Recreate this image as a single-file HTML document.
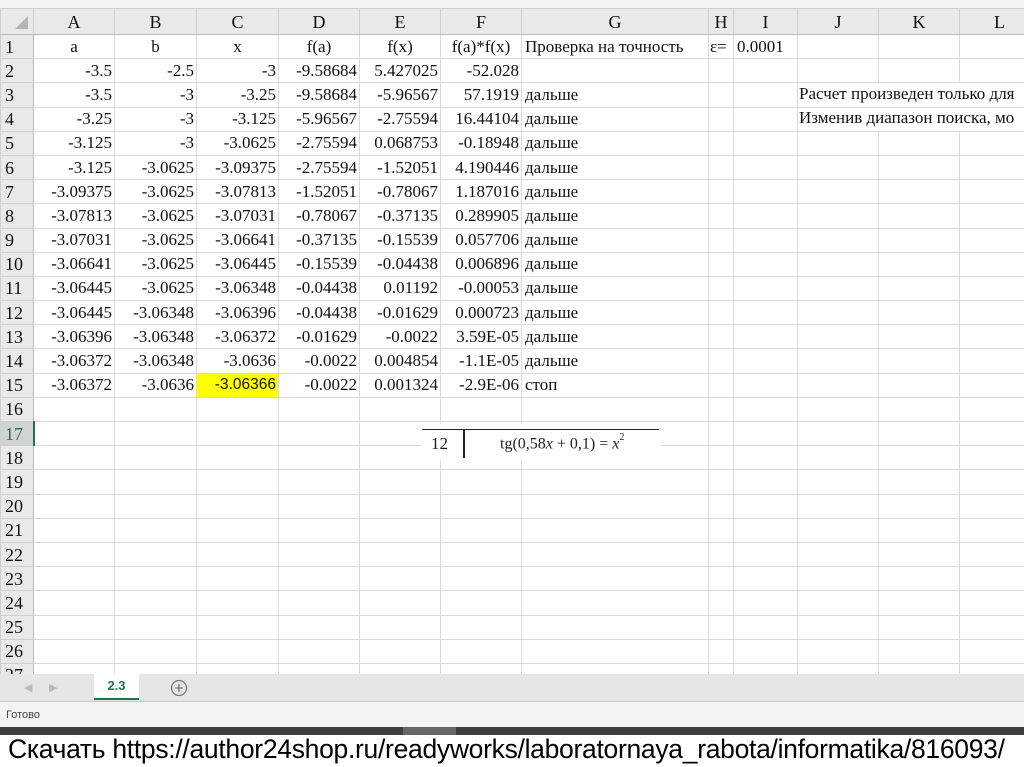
<!DOCTYPE html>
<html><head><meta charset="utf-8"><style>
*{margin:0;padding:0;box-sizing:border-box}
body{width:1024px;height:767px;overflow:hidden;background:#fff;position:relative;font-family:"Liberation Serif",serif}
#top{position:absolute;left:0;top:0;width:1024px;height:8px;background:#f3f3f3}
table{position:absolute;left:0;top:8px;width:1039px;border-collapse:collapse;table-layout:fixed;font-size:17px;color:#111}
td{border:1px solid #dadada;height:24.2px;padding:0 2px;white-space:nowrap;overflow:hidden;text-align:right;line-height:22px}
tr.h td{background:#e9e9e9;text-align:center;height:24.5px;border-color:#cfcfcf;border-bottom:1px solid #b8b8b8;font-size:18px}
td.r{background:#e9e9e9;text-align:left;padding-left:4px;border-color:#cfcfcf;border-right:1px solid #b8b8b8;font-size:18px}
td.c{text-align:center}
td.l{text-align:left;padding-left:3px}
td.y{background:#ffff00;font-family:"Liberation Sans",sans-serif;font-size:15.5px}
td.act{background:#d2d2d2;color:#217346;border-right:2px solid #217346}
.jt{position:absolute;left:799px;font-size:17px;color:#111;white-space:nowrap;background:#fff;width:225px;overflow:hidden;line-height:20px}
#tabs{position:absolute;left:0;top:674px;width:1024px;height:28px;background:#e6e6e6;border-bottom:1px solid #c8c8c8}
#status{position:absolute;left:0;top:702px;width:1024px;height:25px;background:#f3f3f3;font-family:"Liberation Sans",sans-serif;font-size:11px;color:#444;padding:7px 0 0 6px}
#dark{position:absolute;left:0;top:727px;width:1024px;height:8px;background:#3e3e3e}
#dl{position:absolute;left:8px;top:734px;font-family:"Liberation Sans",sans-serif;font-size:26.5px;color:#000;letter-spacing:-0.3px;white-space:nowrap}
</style></head><body>
<div id="top"></div>
<table>
<colgroup><col style="width:33px"><col style="width:81px"><col style="width:82px"><col style="width:82px"><col style="width:81px"><col style="width:81px"><col style="width:81px"><col style="width:187px"><col style="width:25px"><col style="width:64px"><col style="width:81px"><col style="width:81px"><col style="width:80px"></colgroup>
<tr class="h"><td style="background:#e9e9e9;padding:0"><svg width="30" height="20" style="position:relative;top:3px;left:0"><polygon points="26,4 26,17 13,17" fill="#b5b5b5"/></svg></td><td>A</td><td>B</td><td>C</td><td>D</td><td>E</td><td>F</td><td>G</td><td>H</td><td>I</td><td>J</td><td>K</td><td>L</td></tr>
<tr><td class="r">1</td><td class="c">a</td><td class="c">b</td><td class="c">x</td><td class="c">f(a)</td><td class="c">f(x)</td><td class="c">f(a)*f(x)</td><td class="l">Проверка на точность</td><td class="l" style="padding:0 1px">ε=</td><td class="l">0.0001</td><td></td><td></td><td></td></tr>
<tr><td class="r">2</td><td>-3.5</td><td>-2.5</td><td>-3</td><td>-9.58684</td><td>5.427025</td><td>-52.028</td><td></td><td></td><td></td><td></td><td></td><td></td></tr>
<tr><td class="r">3</td><td>-3.5</td><td>-3</td><td>-3.25</td><td>-9.58684</td><td>-5.96567</td><td>57.1919</td><td class="l">дальше</td><td></td><td></td><td style="border-right:none"></td><td style="border-left:none;border-right:none"></td><td style="border-left:none"></td></tr>
<tr><td class="r">4</td><td>-3.25</td><td>-3</td><td>-3.125</td><td>-5.96567</td><td>-2.75594</td><td>16.44104</td><td class="l">дальше</td><td></td><td></td><td style="border-right:none"></td><td style="border-left:none;border-right:none"></td><td style="border-left:none"></td></tr>
<tr><td class="r">5</td><td>-3.125</td><td>-3</td><td>-3.0625</td><td>-2.75594</td><td>0.068753</td><td>-0.18948</td><td class="l">дальше</td><td></td><td></td><td></td><td></td><td></td></tr>
<tr><td class="r">6</td><td>-3.125</td><td>-3.0625</td><td>-3.09375</td><td>-2.75594</td><td>-1.52051</td><td>4.190446</td><td class="l">дальше</td><td></td><td></td><td></td><td></td><td></td></tr>
<tr><td class="r">7</td><td>-3.09375</td><td>-3.0625</td><td>-3.07813</td><td>-1.52051</td><td>-0.78067</td><td>1.187016</td><td class="l">дальше</td><td></td><td></td><td></td><td></td><td></td></tr>
<tr><td class="r">8</td><td>-3.07813</td><td>-3.0625</td><td>-3.07031</td><td>-0.78067</td><td>-0.37135</td><td>0.289905</td><td class="l">дальше</td><td></td><td></td><td></td><td></td><td></td></tr>
<tr><td class="r">9</td><td>-3.07031</td><td>-3.0625</td><td>-3.06641</td><td>-0.37135</td><td>-0.15539</td><td>0.057706</td><td class="l">дальше</td><td></td><td></td><td></td><td></td><td></td></tr>
<tr><td class="r">10</td><td>-3.06641</td><td>-3.0625</td><td>-3.06445</td><td>-0.15539</td><td>-0.04438</td><td>0.006896</td><td class="l">дальше</td><td></td><td></td><td></td><td></td><td></td></tr>
<tr><td class="r">11</td><td>-3.06445</td><td>-3.0625</td><td>-3.06348</td><td>-0.04438</td><td>0.01192</td><td>-0.00053</td><td class="l">дальше</td><td></td><td></td><td></td><td></td><td></td></tr>
<tr><td class="r">12</td><td>-3.06445</td><td>-3.06348</td><td>-3.06396</td><td>-0.04438</td><td>-0.01629</td><td>0.000723</td><td class="l">дальше</td><td></td><td></td><td></td><td></td><td></td></tr>
<tr><td class="r">13</td><td>-3.06396</td><td>-3.06348</td><td>-3.06372</td><td>-0.01629</td><td>-0.0022</td><td>3.59E-05</td><td class="l">дальше</td><td></td><td></td><td></td><td></td><td></td></tr>
<tr><td class="r">14</td><td>-3.06372</td><td>-3.06348</td><td>-3.0636</td><td>-0.0022</td><td>0.004854</td><td>-1.1E-05</td><td class="l">дальше</td><td></td><td></td><td></td><td></td><td></td></tr>
<tr><td class="r">15</td><td>-3.06372</td><td>-3.0636</td><td class="y">-3.06366</td><td>-0.0022</td><td>0.001324</td><td>-2.9E-06</td><td class="l">стоп</td><td></td><td></td><td></td><td></td><td></td></tr>
<tr><td class="r">16</td><td></td><td></td><td></td><td></td><td></td><td></td><td></td><td></td><td></td><td></td><td></td><td></td></tr>
<tr><td class="r act">17</td><td></td><td></td><td></td><td></td><td></td><td></td><td></td><td></td><td></td><td></td><td></td><td></td></tr>
<tr><td class="r">18</td><td></td><td></td><td></td><td></td><td></td><td></td><td></td><td></td><td></td><td></td><td></td><td></td></tr>
<tr><td class="r">19</td><td></td><td></td><td></td><td></td><td></td><td></td><td></td><td></td><td></td><td></td><td></td><td></td></tr>
<tr><td class="r">20</td><td></td><td></td><td></td><td></td><td></td><td></td><td></td><td></td><td></td><td></td><td></td><td></td></tr>
<tr><td class="r">21</td><td></td><td></td><td></td><td></td><td></td><td></td><td></td><td></td><td></td><td></td><td></td><td></td></tr>
<tr><td class="r">22</td><td></td><td></td><td></td><td></td><td></td><td></td><td></td><td></td><td></td><td></td><td></td><td></td></tr>
<tr><td class="r">23</td><td></td><td></td><td></td><td></td><td></td><td></td><td></td><td></td><td></td><td></td><td></td><td></td></tr>
<tr><td class="r">24</td><td></td><td></td><td></td><td></td><td></td><td></td><td></td><td></td><td></td><td></td><td></td><td></td></tr>
<tr><td class="r">25</td><td></td><td></td><td></td><td></td><td></td><td></td><td></td><td></td><td></td><td></td><td></td><td></td></tr>
<tr><td class="r">26</td><td></td><td></td><td></td><td></td><td></td><td></td><td></td><td></td><td></td><td></td><td></td><td></td></tr>
<tr><td class="r">27</td><td></td><td></td><td></td><td></td><td></td><td></td><td></td><td></td><td></td><td></td><td></td><td></td></tr>
</table>
<div class="jt" style="top:84px">Расчет произведен только для</div>
<div class="jt" style="top:108px">Изменив диапазон поиска, мо</div>
<div style="position:absolute;left:421px;top:424px;width:240px;height:36px;background:#fff"></div>
<div style="position:absolute;left:422px;top:429px;width:237px;height:1px;background:#222"></div>
<div style="position:absolute;left:463px;top:429px;width:2px;height:29px;background:#222"></div>
<div style="position:absolute;left:431px;top:434px;font-size:17px;color:#222">12</div>
<div style="position:absolute;left:500px;top:434px;font-size:16px;color:#222">tg(0,58<i>x</i> + 0,1) = <i>x</i><sup style="font-size:10px;position:relative;top:-2px">2</sup></div>
<div id="tabs">
<span style="position:absolute;left:24px;top:7px;color:#bbb;font-size:11px;font-family:'Liberation Sans',sans-serif">◀</span>
<span style="position:absolute;left:49px;top:7px;color:#bbb;font-size:11px;font-family:'Liberation Sans',sans-serif">▶</span>
<div style="position:absolute;left:94px;top:0;width:45px;height:26px;background:#fff;border-bottom:2px solid #217346;text-align:center;font-family:'Liberation Sans',sans-serif;font-weight:bold;font-size:13px;color:#217346;line-height:24px">2.3</div>
<svg style="position:absolute;left:170px;top:5px" width="18" height="18"><circle cx="9" cy="9" r="7.5" fill="none" stroke="#777" stroke-width="1.2"/><path d="M9 5v8M5 9h8" stroke="#777" stroke-width="1.3"/></svg>
</div>
<div id="status">Готово</div>
<div id="dark"><div style="position:absolute;left:403px;top:0;width:53px;height:8px;background:#666"></div></div>
<div id="dl">Скачать https://author24shop.ru/readyworks/laboratornaya_rabota/informatika/816093/</div>
</body></html>
